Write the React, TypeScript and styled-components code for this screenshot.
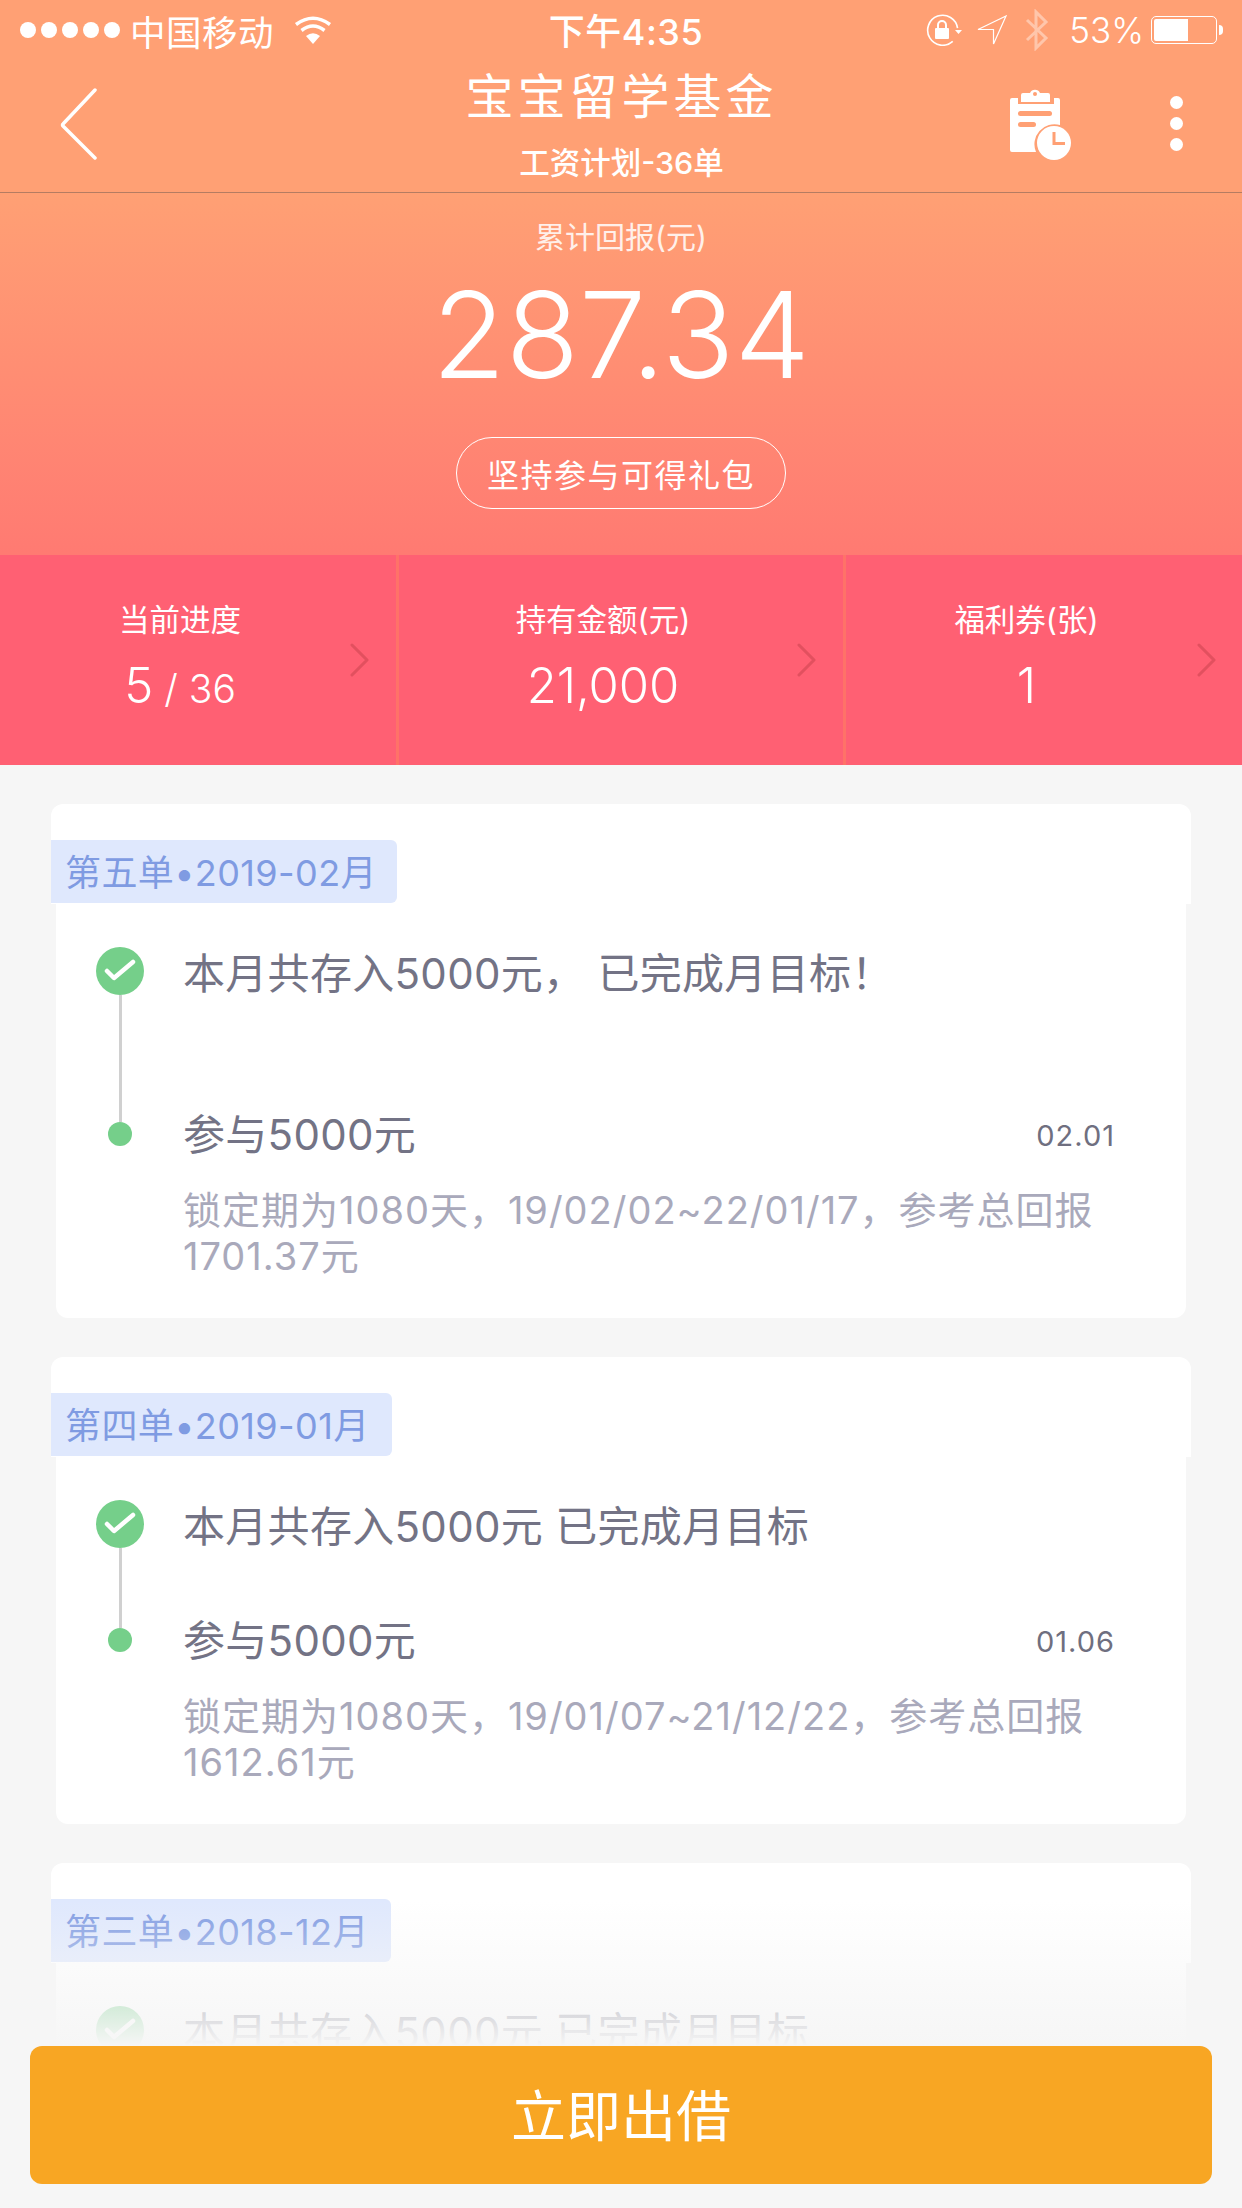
import React from "react";
import styled, { createGlobalStyle } from "styled-components";

const FONT = `Inter, "Noto Sans CJK SC", sans-serif`;

const GlobalStyle = createGlobalStyle`
  html, body {
    margin: 0;
    padding: 0;
    background: #f6f6f6;
  }
  * {
    box-sizing: border-box;
  }
`;

interface Order {
  tag: string;
  tagWidth: number;
  summary: string;
  railHeight: number;
  join?: string;
  date?: string;
  detail?: string;
}

const ORDERS: Order[] = [
  {
    tag: "第五单•2019-02月",
    tagWidth: 346,
    summary: "本月共存入5000元， 已完成月目标！",
    railHeight: 164,
    join: "参与5000元",
    date: "02.01",
    detail: "锁定期为1080天，19/02/02~22/01/17，参考总回报 1701.37元",
  },
  {
    tag: "第四单•2019-01月",
    tagWidth: 341,
    summary: "本月共存入5000元 已完成月目标",
    railHeight: 117,
    join: "参与5000元",
    date: "01.06",
    detail: "锁定期为1080天，19/01/07~21/12/22，参考总回报 1612.61元",
  },
  {
    tag: "第三单•2018-12月",
    tagWidth: 340,
    summary: "本月共存入5000元 已完成月目标",
    railHeight: 116,
  },
];

const App: React.FC = () => {
  return (
    <Page>
      <GlobalStyle />
      <Top>
        <StatusBar>
          <StatusLeft>
            <Signal>
              {[0, 1, 2, 3, 4].map((i) => (
                <SignalDot key={i} />
              ))}
            </Signal>
            <Carrier>中国移动</Carrier>
            <svg width="38" height="28" viewBox="0 0 38 28">
              <path d="M19 28 L12 20 Q19 14.500 26 20 Z" fill="#fff" />
              <path d="M7.500 14.500 Q19 5.500 30.500 14.500" fill="none" stroke="#fff" strokeWidth="3.500" />
              <path d="M2 8.500 Q19 -4 36 8.500" fill="none" stroke="#fff" strokeWidth="3.500" />
            </svg>
          </StatusLeft>
          <Clock>下午4:35</Clock>
          <StatusRight>
            <LockIcon width="36" height="32" viewBox="0 0 36 32">
              <path d="M30 23 A15 15 0 1 1 30 9" fill="none" stroke="#fff" strokeWidth="1.600" transform="rotate(20 16 16)" />
              <path d="M29 16 L36 16 L32.500 20 Z" fill="#fff" />
              <rect x="9" y="14" width="14" height="11" rx="1" fill="#fff" />
              <path d="M12 14 V11 A4 4 0 0 1 20 11 V14" fill="none" stroke="#fff" strokeWidth="2" />
            </LockIcon>
            <svg width="30" height="30" viewBox="0 0 30 30">
              <path d="M29 1 L16.500 29 L16.500 14.500 L1 14.500 Z" fill="none" stroke="#fff" strokeWidth="1.200" />
            </svg>
            <BluetoothIcon width="24" height="42" viewBox="0 0 24 42">
              <path d="M2 11 L21 29 L11 39 V3 L21 13 L2 31" fill="none" stroke="#fff" strokeWidth="3" />
            </BluetoothIcon>
            <Percent>53%</Percent>
            <Battery>
              <BatteryFill $level={53} />
              <BatteryNub />
            </Battery>
          </StatusRight>
        </StatusBar>
        <NavBar>
          <svg width="38" height="72" viewBox="0 0 38 72">
            <path d="M35 2 L3 36 Q2 37 3 38 L35 70" fill="none" stroke="#fff" strokeWidth="3.500" strokeLinecap="round" />
          </svg>
          <NavTitles>
            <NavTitle>宝宝留学基金</NavTitle>
            <NavSubtitle>工资计划-36单</NavSubtitle>
          </NavTitles>
          <NavActions>
            <svg width="62" height="74" viewBox="0 0 62 74">
              <path
                d="M2 11 H8 V17 H44 V11 H48 Q50 11 50 13 V38 A20 20 0 0 0 26 65 H2 Q0 65 0 63 V13 Q0 11 2 11 Z"
                fill="#fff"
              />
              <path d="M13 6 H20 A5.500 5.500 0 0 1 30 6 H38 Q40 6 40 8 V15 H11 V8 Q11 6 13 6 Z" fill="#fff" />
              <circle cx="25" cy="7" r="2" fill="#ffa074" />
              <rect x="8" y="24" width="34" height="5" rx="2.500" fill="#ffa074" />
              <rect x="8" y="35" width="18" height="5" rx="2.500" fill="#ffa074" />
              <circle cx="44" cy="56" r="17" fill="#fff" />
              <path d="M44 45 V56.500 H55" fill="none" stroke="#ffa074" strokeWidth="3" />
            </svg>
            <MoreDots>
              <MoreDot />
              <MoreDot />
              <MoreDot />
            </MoreDots>
          </NavActions>
        </NavBar>
      </Top>

      <Hero>
        <HeroLabel>累计回报(元)</HeroLabel>
        <HeroAmount>287.34</HeroAmount>
        <GiftPill>坚持参与可得礼包</GiftPill>
      </Hero>

      <Stats>
        <StatCell $width={399}>
          <StatText>
            <StatLabel>当前进度</StatLabel>
            <StatValue>
              <StatBig>5</StatBig> / 36
            </StatValue>
          </StatText>
          <Chevron />
        </StatCell>
        <StatCell $width={447}>
          <StatText>
            <StatLabel>持有金额(元)</StatLabel>
            <StatValue>
              <StatBig>21,000</StatBig>
            </StatValue>
          </StatText>
          <Chevron />
        </StatCell>
        <StatCell $width={396}>
          <StatText>
            <StatLabel>福利券(张)</StatLabel>
            <StatValue>
              <StatBig>1</StatBig>
            </StatValue>
          </StatText>
          <Chevron />
        </StatCell>
      </Stats>

      <OrderList>
        {ORDERS.map((order) => (
          <Card key={order.tag}>
            <CardHead>
              <Tag $width={order.tagWidth}>{order.tag}</Tag>
            </CardHead>
            <CardBody>
              <Row $height={order.railHeight}>
                <Rail>
                  <CheckMark>
                    <svg width="32" height="24" viewBox="0 0 32 24">
                      <path d="M3 12 L10 19 L29 3" fill="none" stroke="#fff" strokeWidth="4.500" strokeLinecap="round" strokeLinejoin="round" />
                    </svg>
                  </CheckMark>
                  <Connector />
                </Rail>
                <SummaryMain>
                  <RowTitle>{order.summary}</RowTitle>
                </SummaryMain>
              </Row>
              {order.join && (
                <Row>
                  <Rail>
                    <ConnectorEnd />
                    <Dot />
                  </Rail>
                  <RowMain>
                    <RowHead>
                      <RowTitle>{order.join}</RowTitle>
                      <RowDate>{order.date}</RowDate>
                    </RowHead>
                    <RowDetail>{order.detail}</RowDetail>
                  </RowMain>
                </Row>
              )}
            </CardBody>
          </Card>
        ))}
      </OrderList>

      <Footer>
        <LendButton>立即出借</LendButton>
      </Footer>
    </Page>
  );
};

const Chevron: React.FC = () => (
  <ChevronIcon width="20" height="34" viewBox="0 0 20 34">
    <path d="M2 2 L17 17 L2 32" fill="none" stroke="#e2505f" strokeWidth="3" strokeLinecap="round" strokeLinejoin="round" />
  </ChevronIcon>
);

const Page = styled.div`
  position: relative;
  width: 1242px;
  height: 2208px;
  overflow: hidden;
  background: #f6f6f6;
  font-family: ${FONT};
`;

const Top = styled.header`
  height: 193px;
  background: #ffa074;
  border-bottom: 1px solid #b57c62;
`;

const StatusBar = styled.div`
  display: grid;
  grid-template-columns: 1fr auto 1fr;
  align-items: center;
  height: 60px;
  color: #fff;
`;

const StatusLeft = styled.div`
  display: flex;
  align-items: center;
  padding-left: 20px;

  svg {
    margin-left: 20px;
  }
`;

const Signal = styled.div`
  display: flex;
  gap: 5px;
`;

const SignalDot = styled.span`
  width: 16px;
  height: 16px;
  border-radius: 50%;
  background: #fff;
`;

const Carrier = styled.span`
  margin-left: 10px;
  font-size: 35.500px;
  letter-spacing: 0.500px;
`;

const Clock = styled.span`
  margin: -2px 0 0 10px;
  font-size: 36px;
  font-weight: 500;
  letter-spacing: 0.500px;
`;

const StatusRight = styled.div`
  display: flex;
  align-items: center;
  justify-content: flex-end;
  gap: 18px;
  padding-right: 25px;
`;

const LockIcon = styled.svg`
  margin-right: -3px;
`;

const BluetoothIcon = styled.svg`
  opacity: 0.4;
`;

const Percent = styled.span`
  margin-left: 2px;
  margin-right: -11px;
  font-size: 35px;
  font-weight: 300;
`;

const Battery = styled.div`
  position: relative;
  width: 66px;
  height: 28px;
  padding: 2px;
  border: 1px solid #fff;
  border-radius: 5px;
`;

const BatteryFill = styled.div<{ $level: number }>`
  width: ${(p) => p.$level + 3}%;
  height: 100%;
  background: #fff;
  border-radius: 2px 0 0 2px;
`;

const BatteryNub = styled.span`
  position: absolute;
  top: 8px;
  right: -7px;
  width: 4px;
  height: 10px;
  background: #fff;
  border-radius: 0 4px 4px 0;
`;

const NavBar = styled.nav`
  display: grid;
  grid-template-columns: 1fr auto 1fr;
  align-items: center;
  height: 132px;
  padding: 0 59px 5px 60px;
`;

const NavTitles = styled.div`
  display: flex;
  flex-direction: column;
  align-items: center;
  color: #fff;
`;

const NavTitle = styled.div`
  font-size: 48px;
  line-height: 60px;
  letter-spacing: 4px;
`;

const NavSubtitle = styled.div`
  margin-top: 18px;
  font-size: 30.500px;
  line-height: 36px;
  font-weight: 500;
`;

const NavActions = styled.div`
  display: flex;
  align-items: center;
  justify-content: flex-end;
  gap: 98px;
`;

const MoreDots = styled.div`
  display: flex;
  flex-direction: column;
  gap: 8px;
`;

const MoreDot = styled.span`
  width: 13px;
  height: 13px;
  border-radius: 50%;
  background: #fff;
`;

const Hero = styled.section`
  display: flex;
  flex-direction: column;
  align-items: center;
  height: 362px;
  padding-top: 24px;
  color: #fff;
  background: linear-gradient(180deg, #ffa074 0%, #ff7a72 100%);
`;

const HeroLabel = styled.div`
  font-size: 30px;
  line-height: 40px;
  opacity: 0.85;
`;

const HeroAmount = styled.div`
  margin-top: 7px;
  font-size: 120px;
  line-height: 142px;
  font-weight: 300;
`;

const GiftPill = styled.div`
  display: flex;
  align-items: center;
  justify-content: center;
  margin-top: 31px;
  width: 330px;
  height: 72px;
  border: 1.500px solid #fff;
  border-radius: 36px;
  font-size: 32px;
  letter-spacing: 1.500px;
`;

const Stats = styled.section`
  display: flex;
  height: 210px;
  background: #ff6073;
  color: #fff;
`;

const StatCell = styled.div<{ $width: number }>`
  display: flex;
  align-items: center;
  width: ${(p) => p.$width}px;
  padding-right: 26px;
  border-right: 3px solid #ff7268;

  &:last-child {
    border-right: 0;
    padding-right: 25px;
  }
`;

const StatText = styled.div`
  flex: 1;
  display: flex;
  flex-direction: column;
  align-items: center;
  padding-left: 10px;
  margin-top: -5px;
`;

const StatLabel = styled.div`
  font-size: 30.500px;
  line-height: 44px;
`;

const StatValue = styled.div`
  margin-top: 16px;
  font-size: 39px;
  line-height: 56px;
  font-weight: 300;
`;

const StatBig = styled.span`
  font-size: 49px;
`;

const ChevronIcon = styled.svg`
  flex: none;
`;

const OrderList = styled.main`
  display: flex;
  flex-direction: column;
  gap: 39px;
  padding: 39px 51px 0;
`;

const Card = styled.article`
  display: flex;
  flex-direction: column;
`;

const CardHead = styled.div`
  height: 100px;
  padding-top: 36px;
  background: #fff;
  border-radius: 12px 12px 0 0;
`;

const Tag = styled.div<{ $width: number }>`
  display: flex;
  align-items: center;
  width: ${(p) => p.$width}px;
  height: 63px;
  padding: 0 0 3px 14px;
  font-size: 36px;
  letter-spacing: 0.400px;
  color: #7f9be2;
  background: #dfe8fd;
  border-radius: 0 6px 6px 0;
  white-space: nowrap;
`;

const CardBody = styled.div`
  margin: 0 5px;
  padding: 43px 71px 39px 40px;
  background: #fff;
  border-radius: 0 0 12px 12px;
`;

const Row = styled.div<{ $height?: number }>`
  display: flex;
  gap: 39px;
  height: ${(p) => (p.$height ? `${p.$height}px` : "auto")};
`;

const Rail = styled.div`
  flex: none;
  display: flex;
  flex-direction: column;
  align-items: center;
  width: 48px;
`;

const CheckMark = styled.div`
  flex: none;
  display: flex;
  align-items: center;
  justify-content: center;
  width: 48px;
  height: 48px;
  border-radius: 50%;
  background: #75cf8a;
`;

const Connector = styled.div`
  flex: 1;
  width: 3px;
  background: #d0d0d0;
`;

const ConnectorEnd = styled.div`
  flex: none;
  width: 3px;
  height: 11px;
  background: #d0d0d0;
`;

const Dot = styled.div`
  flex: none;
  width: 24px;
  height: 24px;
  border-radius: 50%;
  background: #75cf8a;
`;

const RowMain = styled.div`
  flex: 1;
  min-width: 0;
`;

const SummaryMain = styled(RowMain)`
  padding-top: 3px;
`;

const RowHead = styled.div`
  display: flex;
  align-items: center;
  justify-content: space-between;
`;

const RowTitle = styled.div`
  font-size: 42px;
  line-height: 48px;
  letter-spacing: 0.300px;
  color: #737385;
  white-space: nowrap;
`;

const RowDate = styled.div`
  font-size: 29px;
  letter-spacing: 1px;
  color: #6f6f80;
`;

const RowDetail = styled.div`
  margin-top: 28px;
  font-size: 38px;
  line-height: 46px;
  letter-spacing: 1px;
  color: #a9a9bb;
`;

const Footer = styled.footer`
  position: absolute;
  left: 0;
  right: 0;
  bottom: 0;
  padding: 146px 30px 24px;
  background: linear-gradient(180deg, rgba(246, 246, 246, 0) 0, #f6f6f6 146px);
`;

const LendButton = styled.div`
  display: flex;
  align-items: center;
  justify-content: center;
  height: 138px;
  padding-bottom: 6px;
  font-size: 55px;
  color: #fff;
  background: #f8a623;
  border-radius: 12px;
`;

export default App;
